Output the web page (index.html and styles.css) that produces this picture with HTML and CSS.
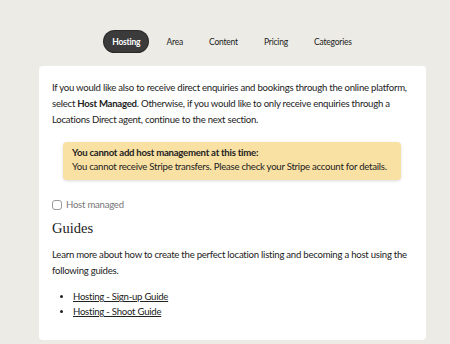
FILE: index.html
```html
<!DOCTYPE html>
<html>
<head>
  <title>Hosting</title>
  <link rel="stylesheet" href="styles.css">
</head>
<body>

  <div class="tabs">
    <div class="tab active">Hosting</div>
    <div class="tab">Area</div>
    <div class="tab">Content</div>
    <div class="tab">Pricing</div>
    <div class="tab">Categories</div>
  </div>

  <div class="card">
    <p class="intro">If you would like also to receive direct enquiries and bookings through the online platform, select <b>Host Managed</b>. Otherwise, if you would like to only receive enquiries through a Locations Direct agent, continue to the next section.</p>

    <div class="alert">
      <b>You cannot add host management at this time:</b>
      <span>You cannot receive Stripe transfers. Please check your Stripe account for details.</span>
    </div>

    <label class="check">
      <input type="checkbox">
      <span>Host managed</span>
    </label>

    <h2>Guides</h2>
    <p>Learn more about how to create the perfect location listing and becoming a host using the following guides.</p>

    <ul class="guides">
      <li><a href="#">Hosting - Sign-up Guide</a></li>
      <li><a href="#">Hosting - Shoot Guide</a></li>
    </ul>
  </div>

</body>
</html>
```

FILE: styles.css
```css
body {
  margin: 0;
  background-color: #ecebe6;
  font-family: Lato, "Liberation Sans", sans-serif;
  color: #222;
  overflow: hidden;
}

.tabs {
  display: flex;
  justify-content: center;
  align-items: center;
  gap: 10px;
  padding: 31px 0 14px;
  margin-left: 14px;
}

.tab {
  font-size: 8.5px;
  letter-spacing: -0.2px;
  padding: 0 8px;
  height: 21px;
  display: flex;
  align-items: center;
  border-radius: 11px;
  color: #222;
}

.tab.active {
  background-color: #3b3b3b;
  color: #fff;
  font-weight: bold;
  box-shadow: 0 0 0 1px #2a2a2a;
}

.card {
  margin-left: 39px;
  width: 387px;
  box-sizing: border-box;
  background-color: #fff;
  border-radius: 4px;
  padding: 14px 13px 21px;
  font-size: 9.6px;
  letter-spacing: -0.25px;
  line-height: 16px;
}

.card p {
  margin: 0;
}

.intro {
  margin-bottom: 14px !important;
}

.alert {
  margin: 0 12px 0 11px;
  background-color: #f9e0a3;
  border-radius: 4px;
  padding: 4px 9px 6px;
  box-shadow: 0 1px 3px rgba(0, 0, 0, 0.15);
  display: flex;
  flex-direction: column;
  line-height: 14px;
}

.check {
  display: flex;
  align-items: center;
  gap: 4px;
  margin-top: 17px;
  color: #777;
}

.check input {
  appearance: none;
  margin: 0;
  width: 10px;
  height: 10px;
  border: 1px solid #999;
  border-radius: 3px;
  background-color: #fff;
}

h2 {
  font-family: "Liberation Serif", serif;
  font-weight: normal;
  font-size: 14.5px;
  line-height: 18px;
  letter-spacing: 0;
  margin: 6px 0 10px;
}

.guides {
  margin: 10px 0 0;
  padding-left: 21px;
  line-height: 15px;
}

.guides a {
  color: #222;
}
```
